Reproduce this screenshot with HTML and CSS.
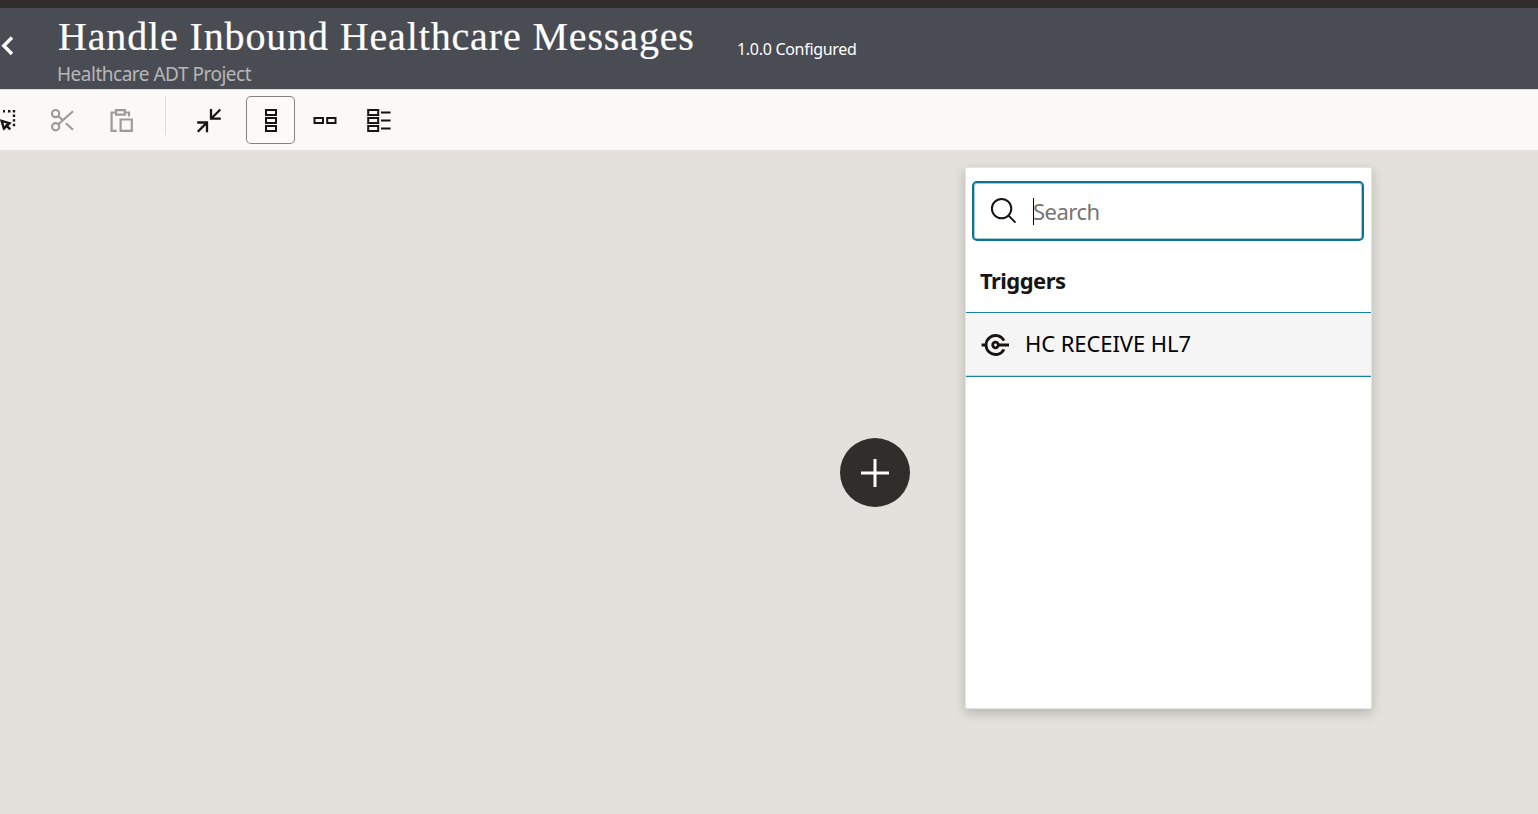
FILE: index.html
```html
<!DOCTYPE html>
<html lang="en">
<head>
<meta charset="utf-8">
<title>Handle Inbound Healthcare Messages</title>
<link rel="stylesheet" href="styles.css">
</head>
<body>
<div class="top-strip"></div>
<header class="header">
  <svg class="back" viewBox="0 0 57 81"><path d="M12 29.5 3.8 37.7 12 46"/></svg>
  <div class="titles">
    <h1 class="title">Handle Inbound Healthcare Messages</h1>
    <p class="project">Healthcare ADT Project</p>
  </div>
  <span class="status">1.0.0 Configured</span>
</header>
<nav class="toolbar">
  <svg class="tool tool-select" viewBox="0 96 33 48">
    <path class="dots" d="M3 110h2v2.4H3zM8 110h2.4v2.4H8zM12.8 110h2.4v2.4h-2.4zM12.8 114.6h2.4v2.4h-2.4zM12.8 119.2h2.4v2.4h-2.4zM12.8 123.8h2.4v2.4h-2.4z"/>
    <path d="M1.6 120.9 9.5 123.2 3.9 128.5zM5.6 124.6 10.2 129.4"/>
  </svg>
  <svg class="tool tool-cut disabled" viewBox="33 96 58 48">
    <circle cx="55.6" cy="113.6" r="3.6"/><circle cx="55.6" cy="126.8" r="3.6"/>
    <path d="M58.4 124.2 73 111.2M58.4 116.2 63 120.4M65.8 123.2 73 129.8"/>
  </svg>
  <svg class="tool tool-paste disabled" viewBox="91 96 74 48">
    <path d="M116 112.5h-4.4v18.4h5.2M125 112.5h4v4M116 110.2h8.8v4.4H116zM120.6 119.5h11.2v11.4h-11.2z"/>
  </svg>
  <span class="divider"></span>
  <svg class="tool tool-collapse" viewBox="166 96 80 48">
    <path d="M211 109v9.6h9.8M211.5 118.2l8.8-8.7M197.2 122.5H207v9.7M206.6 122.9l-8.8 8.8"/>
  </svg>
  <button class="toggle" aria-label="Vertical layout">
    <svg viewBox="246 96 49 48"><path d="M266 110h10v5h-10zM266 118h10v5h-10zM266 126h10v5h-10z"/></svg>
  </button>
  <svg class="tool tool-row" viewBox="295 96 58 48"><path d="M314.5 118h8.5v5h-8.5zM327.2 118h8.3v5h-8.3z"/></svg>
  <svg class="tool tool-list" viewBox="353 96 58 48"><path d="M368.2 110h10v5h-10zM368.2 118h10v5h-10zM368.2 126h10v5h-10zM381 112.5h9.6M381 120.5h9.6M381 128.5h9.6"/></svg>
</nav>
<main class="canvas">
  <button class="add" aria-label="Add"><svg viewBox="0 0 70 69"><path d="M21 35h28M35 21v28"/></svg></button>
  <section class="panel">
    <div class="search">
      <svg viewBox="989 197 28 28"><circle cx="1001.6" cy="208.6" r="9.7"/><path d="M1008.6 215.6l6.9 7"/></svg>
      <span class="caret"></span><span class="placeholder">Search</span>
    </div>
    <h2 class="group">Triggers</h2>
    <div class="item">
      <svg viewBox="981 331 29 28"><path d="M1004 340.7A9.5 9.5 0 1 0 1004 349.3M981.6 345h4.6M999 345h10"/><circle cx="995.5" cy="345" r="2.8"/></svg>
      <span class="item-name">HC RECEIVE HL7</span>
    </div>
  </section>
</main>
</body>
</html>
```
FILE: styles.css
```css
* { box-sizing: border-box; }
body { margin: 0; width: 1538px; height: 814px; overflow: hidden; display: flex; flex-direction: column; font-family: "Noto Sans", sans-serif; color: #161513; }
svg { display: block; flex: none; fill: none; stroke: #161513; stroke-width: 2; }
button { padding: 0; margin: 0; }
.top-strip { height: 8px; flex: none; background: #312d2a; }
.header { height: 81px; flex: none; display: flex; align-items: flex-start; background: #4a4c54; color: #fff; white-space: nowrap; }
.back { width: 57px; height: 81px; stroke: #fff; stroke-width: 3.4; }
.titles { width: 680px; }
.title { margin: 6px 0 0 1px; font: 400 40px/46px "Liberation Serif", serif; letter-spacing: .86px; -webkit-text-stroke: .2px #fff; }
.project { margin: 1px 0 0; font-size: 19px; line-height: 26px; letter-spacing: -.49px; color: #b6b7b8; }
.status { margin-top: 29px; font-size: 16px; line-height: 24px; letter-spacing: -.3px; }
.toolbar { height: 61px; flex: none; display: flex; align-items: flex-start; padding-top: 6px; background: #faf9f8; border-top: 1px solid #e3e0dc; }
.tool { height: 48px; }
.tool-select { width: 33px; stroke-width: 2.4; }
.tool-select .dots { fill: #161513; stroke: none; }
.tool-cut { width: 58px; }
.tool-paste { width: 74px; }
.disabled { stroke: #9d9b99; stroke-width: 2.2; }
.divider { width: 1px; height: 39px; background: #dfdddb; }
.tool-collapse { width: 80px; stroke-width: 2.3; }
.toggle { width: 49px; height: 48px; background: #fbfaf9; border: 0; border-radius: 5px; box-shadow: inset 0 0 0 1px #858381; }
.toggle svg { width: 49px; height: 48px; }
.tool-row, .tool-list { width: 58px; }
.canvas { flex: 1; position: relative; background: #e4e1dc; }
.add { position: absolute; left: 840px; top: 288px; width: 70px; height: 69px; border: 0; border-radius: 50%; background: #312d2a; }
.add svg { width: 70px; height: 69px; stroke: #fff; stroke-width: 3; }
.panel { position: absolute; left: 965px; top: 17px; width: 407px; height: 542px; background: #fff; border: 1px solid #e6e5e4; border-radius: 2px; box-shadow: 0 4px 12px rgba(0,0,0,.2); }
.search { margin: 13px 7px 0 6px; height: 60px; display: flex; align-items: center; padding-left: 15px; border: 2px solid #0e7295; border-radius: 5px; box-shadow: inset 0 0 0 1px #a3cbd9; }
.search svg { width: 28px; height: 28px; }
.caret { width: 1px; height: 27px; margin-left: 16px; background: #000; }
.placeholder { font-size: 22px; line-height: 30px; letter-spacing: -.5px; color: #757472; margin: -1px 0 0 -1px; }
.group { margin: 24px 0 0 14px; font-size: 22px; line-height: 30px; font-weight: 700; letter-spacing: -.55px; }
.item { margin-top: 17px; height: 65px; display: flex; align-items: center; padding-left: 15px; background: #f5f5f5; border: solid #17829f; border-width: 1px 0; box-shadow: inset 0 -1px #c4dbe3; color: #000; }
.item svg { width: 29px; height: 28px; stroke-width: 2.8; }
.item-name { margin: -3px 0 0 15px; font-size: 22px; line-height: 30px; letter-spacing: -.08px; }
```
